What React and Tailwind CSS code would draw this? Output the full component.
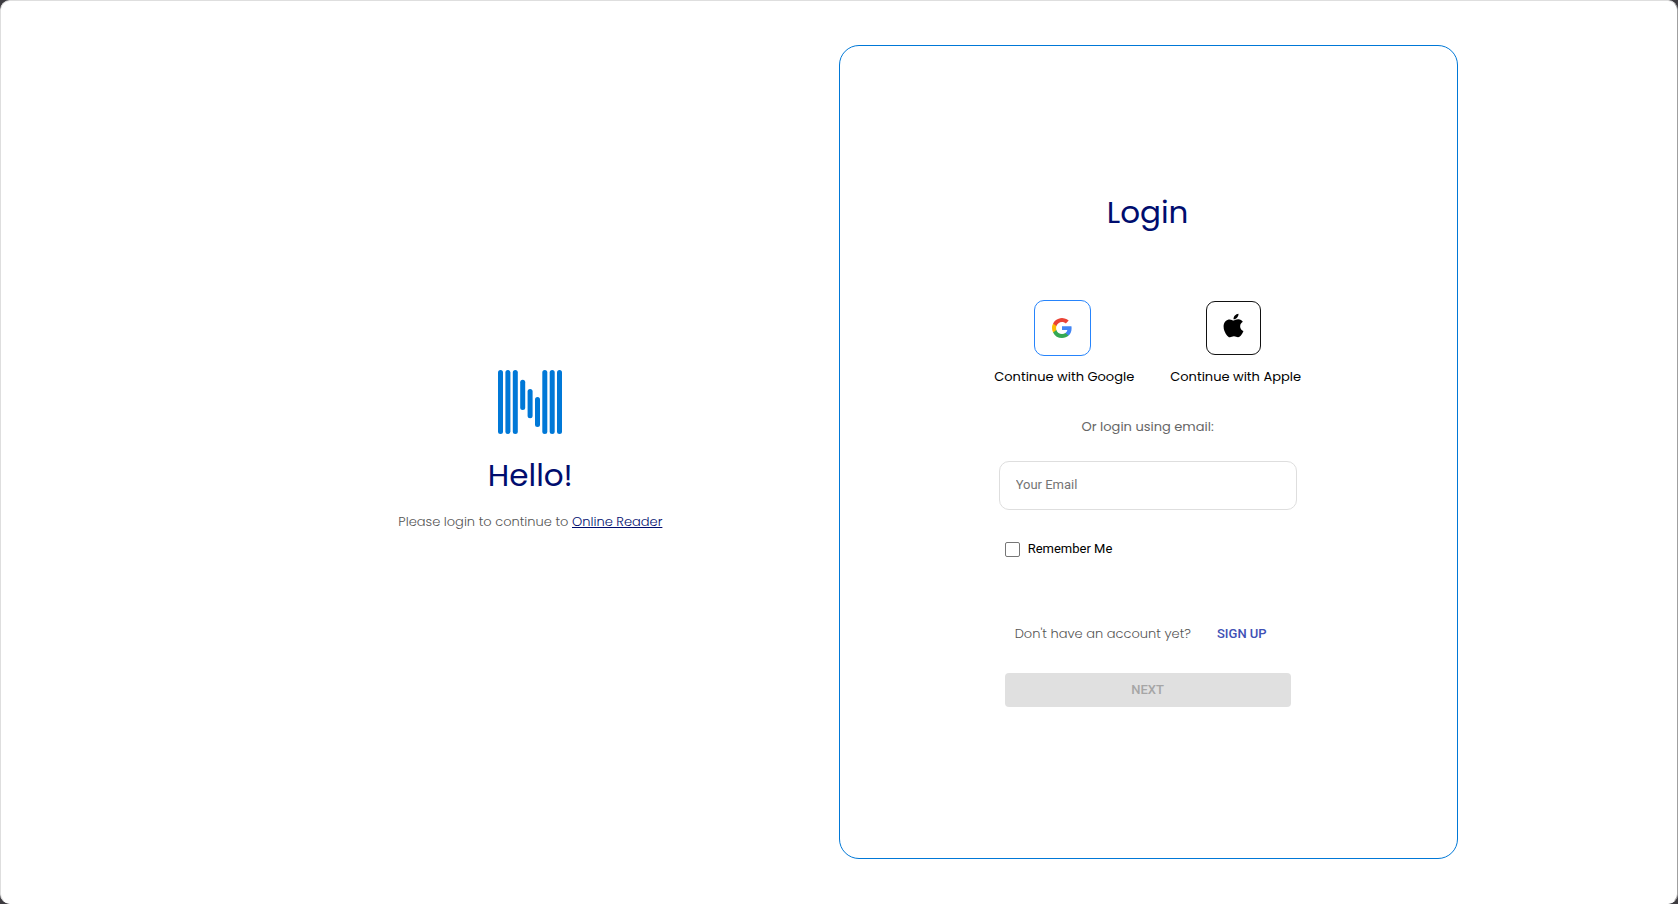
import React from 'react';
import { FaApple } from 'react-icons/fa';

const NBarsLogo = () => (
  <svg viewBox="0 0 64 64" className="w-16 h-16" fill="#0078d7" aria-hidden="true">
    <rect x="0" y="0" width="5" height="64" rx="2.5" />
    <rect x="7.4" y="0" width="5" height="64" rx="2.5" />
    <rect x="14.8" y="0" width="5" height="64" rx="2.5" />
    <rect x="22.2" y="9.8" width="5" height="30.2" rx="2.5" />
    <rect x="29.6" y="18.9" width="5" height="29.4" rx="2.5" />
    <rect x="37" y="27" width="5" height="30" rx="2.5" />
    <rect x="44.3" y="0" width="5" height="64" rx="2.5" />
    <rect x="51.7" y="0" width="5" height="64" rx="2.5" />
    <rect x="59" y="0" width="5" height="64" rx="2.5" />
  </svg>
);

const GoogleIcon = () => (
  <svg viewBox="0 0 18 18" className="w-5 h-5" aria-hidden="true">
    <path fill="#4285f4" d="M17.64 9.2c0-.64-.06-1.25-.16-1.84H9v3.48h4.84a4.14 4.14 0 0 1-1.8 2.72v2.26h2.92c1.7-1.57 2.68-3.88 2.68-6.62z" />
    <path fill="#34a853" d="M9 18c2.43 0 4.47-.8 5.96-2.18l-2.92-2.26c-.8.54-1.84.86-3.04.86-2.34 0-4.33-1.58-5.04-3.71H.96v2.33A9 9 0 0 0 9 18z" />
    <path fill="#fbbc05" d="M3.96 10.71A5.41 5.41 0 0 1 3.68 9c0-.6.1-1.17.28-1.71V4.96H.96A9 9 0 0 0 0 9c0 1.45.35 2.83.96 4.04l3-2.33z" />
    <path fill="#ea4335" d="M9 3.58c1.32 0 2.5.45 3.44 1.35l2.58-2.59A9 9 0 0 0 .96 4.96l3 2.33C4.67 5.16 6.66 3.58 9 3.58z" />
  </svg>
);

const Welcome = () => (
  <section className="w-1/2 pl-0.5 flex flex-col items-center justify-center">
    <NBarsLogo />
    <h1 className="mt-[21px] text-[31px] leading-10 text-[#000d6e]">Hello!</h1>
    <p className="mt-[17px] mb-0.5 text-[13px] leading-5 font-light text-[#555555] whitespace-nowrap">
      Please login to continue to{' '}
      <a href="#reader" className="text-[#000d6e] underline">Online Reader</a>
    </p>
  </section>
);

const LoginPanel = () => (
  <section className="w-1/2 pr-0.5 flex flex-col items-center justify-center border border-[#0078d7] rounded-[20px]">
    <form className="flex flex-col items-center" onSubmit={(e) => e.preventDefault()}>
      <h2 className="text-[31px] leading-10 text-[#000d6e]">Login</h2>

      <div className="mt-17 flex gap-9 text-[13px] leading-5 text-black whitespace-nowrap">
        <button type="button" className="flex flex-col items-center">
          <span className="mr-1 w-[57px] h-14 flex items-center justify-center border border-[#2684fc] rounded-[10px]">
            <GoogleIcon />
          </span>
          <span className="mt-[11px]">Continue with Google</span>
        </button>
        <button type="button" className="flex flex-col items-center">
          <span className="mr-1 h-14 flex items-center">
            <span className="w-[55px] h-[54px] pb-1.5 flex items-center justify-center border border-[#111111] rounded-[9px]">
              <FaApple size={27} />
            </span>
          </span>
          <span className="mt-[11px]">Continue with Apple</span>
        </button>
      </div>

      <p className="mt-[30px] text-[13px] leading-5 text-[#666666]">Or login using email:</p>

      <input
        type="email"
        aria-label="Your Email"
        placeholder="Your Email"
        className="mt-6 w-[298px] h-[49px] px-4 pb-0.5 border border-[#dedede] rounded-[10px] font-[Roboto,sans-serif] text-[13px] placeholder:text-[#757575]"
      />

      <div className="mt-[29px] w-[286px] flex items-center gap-2">
        <input
          id="remember"
          type="checkbox"
          className="w-[15px] h-[15px] appearance-none border border-[#767676] rounded-[2px] bg-white checked:bg-[#0078d7]"
        />
        <label htmlFor="remember" className="font-[Roboto,sans-serif] text-[13px] leading-5 text-black">
          Remember Me
        </label>
      </div>

      <div className="mt-[65px] w-[286px] pl-2.5 flex items-center gap-[26px] whitespace-nowrap">
        <p className="text-[13px] leading-5 font-light text-[#555555]">Don't have an account yet?</p>
        <a href="#signup" className="font-[Roboto,sans-serif] text-[13px] leading-5 font-medium text-[#3f51b5]">
          SIGN UP
        </a>
      </div>

      <button
        type="submit"
        disabled
        className="mt-[29px] mb-[5px] w-[286px] h-[34px] rounded bg-[#e0e0e0] font-[Roboto,sans-serif] text-[13px] font-medium text-[#a6a6a6]"
      >
        NEXT
      </button>
    </form>
  </section>
);

const App = () => (
  <div className="min-h-screen bg-[#3d3b40] flex">
    <main className="flex-1 flex items-center justify-center bg-white border border-[#dedede] border-r-[#a0a0a0] border-b-white rounded-[10px] font-[Poppins,sans-serif]">
      <div className="w-[73.9%] min-h-[90vh] flex items-stretch">
        <Welcome />
        <LoginPanel />
      </div>
    </main>
  </div>
);

export default App;
